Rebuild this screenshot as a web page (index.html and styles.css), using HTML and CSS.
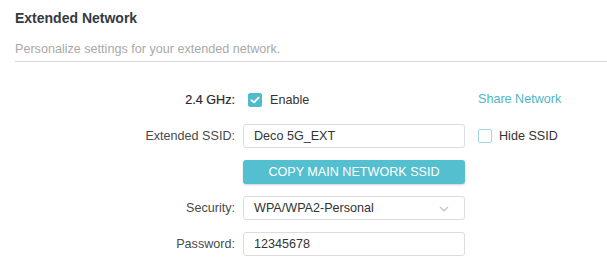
FILE: index.html
```html
<!DOCTYPE html>
<html>
<head>
<meta charset="utf-8">
<link rel="stylesheet" href="styles.css">
</head>
<body>
<div class="page">
  <div class="header">
    <h2 class="title">Extended Network</h2>
    <p class="subtitle">Personalize settings for your extended network.</p>
  </div>
  <div class="form">
    <div class="label strong">2.4 GHz:</div>
    <div class="control check-row">
      <span class="checkbox checked">
        <svg width="10" height="8" viewBox="0 0 10 8"><path d="M1.5 4.2 L4 6.4 L8.6 1.6" fill="none" stroke="#fff" stroke-width="1.8" stroke-linecap="round" stroke-linejoin="round"/></svg>
      </span>
      <span class="check-label">Enable</span>
    </div>
    <div class="extra"><a class="link">Share Network</a></div>

    <div class="label">Extended SSID:</div>
    <div class="control"><div class="input">Deco 5G_EXT</div></div>
    <div class="extra check-row"><span class="checkbox"></span><span class="check-label">Hide SSID</span></div>

    <div class="label"></div>
    <div class="control"><button class="btn">COPY MAIN NETWORK SSID</button></div>
    <div class="extra"></div>

    <div class="label">Security:</div>
    <div class="control"><div class="input select">WPA/WPA2-Personal
      <svg class="chev" width="10" height="6" viewBox="0 0 10 6"><path d="M1 1 L5 4.8 L9 1" fill="none" stroke="#c4c4c4" stroke-width="1.3"/></svg></div></div>
    <div class="extra"></div>

    <div class="label">Password:</div>
    <div class="control"><div class="input">12345678</div></div>
    <div class="extra"></div>
  </div>
</div>
</body>
</html>
```
FILE: styles.css
```css
* { box-sizing: border-box; }
html, body { margin: 0; padding: 0; background: #fff; }
body {
  font-family: "Liberation Sans", Arial, sans-serif;
  font-size: 12.6px;
  color: #333;
}
.page { width: 607px; height: 275px; overflow: hidden; }
.header {
  margin-left: 15px;
  padding-top: 10px;
  border-bottom: 1px solid #d9d9d9;
  height: 62px;
}
.title {
  margin: 0;
  font-size: 14px;
  font-weight: bold;
  color: #333a40;
  line-height: 17px;
}
.subtitle {
  margin: 15px 0 0 0;
  font-size: 12.6px;
  line-height: 15px;
  color: #a9a9a9;
}
.form {
  display: grid;
  grid-template-columns: 235px 222px 1fr;
  grid-auto-rows: 24px;
  column-gap: 8px;
  row-gap: 12px;
  margin-top: 26px;
}
.label {
  text-align: right;
  line-height: 24px;
  color: #4a4a4a;
}
.label.strong { color: #2a2a2a; -webkit-text-stroke: 0.2px #2a2a2a; }
.control { display: flex; align-items: center; }
.extra { margin-left: 5px; display: flex; align-items: center; }
.check-row { display: flex; align-items: center; }
.control.check-row { padding-left: 5px; }
.checkbox {
  width: 14px;
  height: 14px;
  border: 1.5px solid #9fd9e2;
  border-radius: 2px;
  display: inline-flex;
  align-items: center;
  justify-content: center;
  flex: none;
}
.checkbox.checked {
  background: #4fbccb;
  border-color: #4fbccb;
}
.check-label { margin-left: 8px; color: #333; }
.extra .check-label { margin-left: 7px; }
.link { color: #4fb6c6; text-decoration: none; margin-top: -2px; }
.input {
  width: 222px;
  height: 24px;
  border: 1px solid #dcdcdc;
  border-radius: 3px;
  padding: 0 10px;
  line-height: 22px;
  color: #333;
  position: relative;
}
.chev { position: absolute; right: 15px; top: 9px; }
.btn {
  width: 222px;
  height: 24px;
  border: none;
  border-radius: 3px;
  background: #54bfcf;
  color: #fff;
  font-family: "Liberation Sans", Arial, sans-serif;
  font-size: 12.6px;
  padding: 0;
  box-shadow: 0 1px 2px rgba(0,0,0,0.18);
}
```
